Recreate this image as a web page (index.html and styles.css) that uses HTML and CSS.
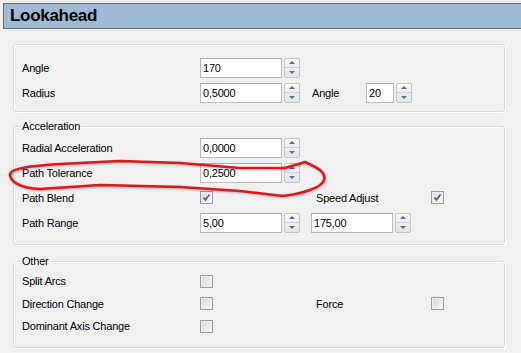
FILE: index.html
```html
<!DOCTYPE html>
<html lang="en">
<head>
    <meta charset="UTF-8">
    <title>Lookahead</title>
    <link rel="stylesheet" href="styles.css">
</head>
<body>
    <div class="titlebar">Lookahead</div>

    <fieldset class="group first">
        <div class="row">
            <span class="label">Angle</span>
            <div class="spin"><input type="text" value="170"><span class="spinner"><i class="up"></i><i class="down"></i></span></div>
        </div>
        <div class="row">
            <span class="label">Radius</span>
            <div class="spin"><input type="text" value="0,5000"><span class="spinner"><i class="up"></i><i class="down"></i></span></div>
            <span class="label second-angle">Angle</span>
            <div class="spin small"><input type="text" value="20"><span class="spinner"><i class="up"></i><i class="down"></i></span></div>
        </div>
    </fieldset>

    <fieldset class="group">
        <legend>Acceleration</legend>
        <div class="row">
            <span class="label">Radial Acceleration</span>
            <div class="spin"><input type="text" value="0,0000"><span class="spinner"><i class="up"></i><i class="down"></i></span></div>
        </div>
        <div class="row">
            <span class="label">Path Tolerance</span>
            <div class="spin"><input type="text" value="0,2500"><span class="spinner"><i class="up"></i><i class="down"></i></span></div>
        </div>
        <div class="row">
            <span class="label">Path Blend</span>
            <span class="check checked"><svg viewBox="0 0 9 9" width="9" height="9"><path d="M1.5 4.5 L3.5 7 L7.5 1.5" fill="none" stroke="#3c5a9a" stroke-width="1.6"/></svg></span>
            <span class="label pair">Speed Adjust</span>
            <span class="check checked"><svg viewBox="0 0 9 9" width="9" height="9"><path d="M1.5 4.5 L3.5 7 L7.5 1.5" fill="none" stroke="#3c5a9a" stroke-width="1.6"/></svg></span>
        </div>
        <div class="row">
            <span class="label">Path Range</span>
            <div class="spin"><input type="text" value="5,00"><span class="spinner"><i class="up"></i><i class="down"></i></span></div>
            <div class="spin range-end"><input type="text" value="175,00"><span class="spinner"><i class="up"></i><i class="down"></i></span></div>
        </div>
    </fieldset>

    <fieldset class="group other">
        <legend>Other</legend>
        <div class="row short">
            <span class="label">Split Arcs</span>
            <span class="check"></span>
        </div>
        <div class="row short">
            <span class="label">Direction Change</span>
            <span class="check"></span>
            <span class="label pair">Force</span>
            <span class="check"></span>
        </div>
        <div class="row short">
            <span class="label">Dominant Axis Change</span>
            <span class="check"></span>
        </div>
    </fieldset>

    <!-- hand-drawn highlight around Path Tolerance -->
    <svg class="scribble" width="521" height="353" viewBox="0 0 521 353">
        <path d="M10 174 C12 168 30 166 60 164 L120 161 L180 163 L240 168 L285 168 L305 162 C318 168 326 172 324 180 C322 188 300 194 283 196 L240 191 L180 187 L100 185 L40 189 C20 188 10 182 10 174 Z"
              fill="none" stroke="#e0181a" stroke-width="2.6" stroke-linejoin="round"/>
    </svg>
</body>
</html>
```

FILE: styles.css
```css
body {
    margin: 0;
    background-color: #f0f0f0;
    font-family: "Liberation Sans", Arial, sans-serif;
    font-size: 11px;
    letter-spacing: -0.2px;
    color: #000;
    width: 521px;
    height: 353px;
    overflow: hidden;
    position: relative;
}

.titlebar {
    margin: 3px 0 0 3px;
    height: 24px;
    line-height: 24px;
    padding-left: 6px;
    background-color: #9fbad5;
    border: 1px solid #6e6e6e;
    border-right: none;
    font-size: 17px;
    font-weight: bold;
    letter-spacing: -0.3px;
}

.group {
    margin: 7px 16px 0 13px;
    padding: 2px 8px 9px;
    border: 1px solid #d5dfe5;
    border-radius: 3px;
    box-shadow: inset 1px 1px 0 #fff, 1px 1px 0 #fff;
}

.group.first {
    margin-top: 15px;
    padding-top: 10px;
    padding-bottom: 6px;
}

.group.other {
    margin-top: 9px;
}

.group legend {
    padding: 0 1px;
    margin-left: -1px;
    line-height: 14px;
}

.row {
    display: flex;
    align-items: center;
    height: 25px;
}

.row.short {
    height: 22.5px;
}

.label {
    width: 178px;
    flex-shrink: 0;
}

.label.second-angle {
    width: 54px;
    margin-left: 12px;
}

.label.pair {
    width: 115px;
    margin-left: 103px;
}

.spin {
    display: flex;
    gap: 2px;
    height: 20px;
}

.spin input {
    width: 82px;
    height: 20px;
    box-sizing: border-box;
    margin: 0;
    padding: 0 2px;
    border: 1px solid #b9bcc1;
    border-top-color: #a6a9ae;
    background: #fff;
    font-family: inherit;
    font-size: 11px;
    letter-spacing: -0.2px;
    color: #000;
}

.spin.small input {
    width: 28px;
}

.range-end {
    margin-left: 11px;
}

.spinner {
    width: 16px;
    height: 20px;
    box-sizing: border-box;
    border: 1px solid #c3c6ca;
    border-radius: 2px;
    background: linear-gradient(#f7f7f7, #e4e4e4);
    display: flex;
    flex-direction: column;
}

.spinner i {
    flex: 1;
    display: flex;
    align-items: center;
    justify-content: center;
}

.spinner i.up {
    border-bottom: 1px solid #d0d2d5;
}

.spinner i::after {
    content: "";
    width: 0;
    height: 0;
    border-left: 3px solid transparent;
    border-right: 3px solid transparent;
}

.spinner i.up::after {
    border-bottom: 3px solid #55699a;
}

.spinner i.down::after {
    border-top: 3px solid #55699a;
}

.check {
    width: 13px;
    height: 13px;
    box-sizing: border-box;
    border: 1px solid #9b9b9b;
    background: linear-gradient(135deg, #d6d6d6, #f8f8f8);
    box-shadow: inset 0 0 0 1px #eeeeee;
    display: flex;
    align-items: center;
    justify-content: center;
    flex-shrink: 0;
}

.check.checked {
    background: linear-gradient(135deg, #dedede, #fafafa);
}

.scribble {
    position: absolute;
    left: 0;
    top: 0;
    pointer-events: none;
    filter: drop-shadow(1px 1px 1px rgba(0, 0, 0, 0.25));
}
```
